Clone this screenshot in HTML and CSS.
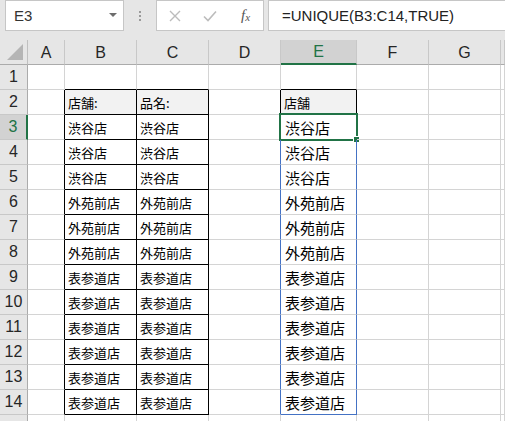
FILE: index.html
```html
<!DOCTYPE html>
<html lang="ja">
<head>
<meta charset="utf-8">
<link rel="stylesheet" href="styles.css">
</head>
<body>
<div class="app">
  <div class="toolbar">
    <div class="namebox"><span class="ref">E3</span><span class="caret"></span></div>
    <div class="sep"><span></span><span></span><span></span></div>
    <div class="btnbox">
      <svg class="ico" width="12" height="12" viewBox="0 0 12 12"><path d="M1 1L11 11M11 1L1 11" stroke="#bcbcbc" stroke-width="1.4" fill="none"/></svg>
      <svg class="ico" width="14" height="12" viewBox="0 0 14 12"><path d="M1 6.5L5 10.5L13 1.5" stroke="#bcbcbc" stroke-width="1.6" fill="none"/></svg>
      <span class="fx">f<sub>x</sub></span>
    </div>
    <div class="formula">=UNIQUE(B3:C14,TRUE)</div>
  </div>

  <div class="sheet">
    <!-- header row -->
    <div class="corner"><svg width="18" height="18" viewBox="0 0 18 18"><path d="M17 1V17H1Z" fill="#b5b5b5"/></svg></div>
    <div class="ch">A</div><div class="ch">B</div><div class="ch">C</div><div class="ch">D</div><div class="ch sel">E</div><div class="ch">F</div><div class="ch">G</div><div class="ch"></div>

    <!-- row 1 -->
    <div class="rh">1</div><div class="c"></div><div class="c bb"></div><div class="c bb"></div><div class="c"></div><div class="c bb"></div><div class="c"></div><div class="c"></div><div class="c"></div>

    <!-- row 2 -->
    <div class="rh">2</div><div class="c br"></div><div class="c br bb hd">店舗:</div><div class="c br bb hd">品名:</div><div class="c br"></div><div class="c br bb hd">店舗</div><div class="c"></div><div class="c"></div><div class="c"></div>

    <!-- row 3 -->
    <div class="rh rsel">3</div><div class="c br"></div><div class="c br bb">渋谷店</div><div class="c br bb">渋谷店</div><div class="c blr"></div><div class="c blr big cur">渋谷店<span class="cursor"><span class="handle"></span></span></div><div class="c"></div><div class="c"></div><div class="c"></div>

    <!-- row 4 -->
    <div class="rh">4</div><div class="c br"></div><div class="c br bb">渋谷店</div><div class="c br bb">渋谷店</div><div class="c blr"></div><div class="c blr big">渋谷店</div><div class="c"></div><div class="c"></div><div class="c"></div>

    <!-- row 5 -->
    <div class="rh">5</div><div class="c br"></div><div class="c br bb">渋谷店</div><div class="c br bb">渋谷店</div><div class="c blr"></div><div class="c blr big">渋谷店</div><div class="c"></div><div class="c"></div><div class="c"></div>

    <!-- row 6 -->
    <div class="rh">6</div><div class="c br"></div><div class="c br bb">外苑前店</div><div class="c br bb">外苑前店</div><div class="c blr"></div><div class="c blr big">外苑前店</div><div class="c"></div><div class="c"></div><div class="c"></div>

    <!-- row 7 -->
    <div class="rh">7</div><div class="c br"></div><div class="c br bb">外苑前店</div><div class="c br bb">外苑前店</div><div class="c blr"></div><div class="c blr big">外苑前店</div><div class="c"></div><div class="c"></div><div class="c"></div>

    <!-- row 8 -->
    <div class="rh">8</div><div class="c br"></div><div class="c br bb">外苑前店</div><div class="c br bb">外苑前店</div><div class="c blr"></div><div class="c blr big">外苑前店</div><div class="c"></div><div class="c"></div><div class="c"></div>

    <!-- row 9 -->
    <div class="rh">9</div><div class="c br"></div><div class="c br bb">表参道店</div><div class="c br bb">表参道店</div><div class="c blr"></div><div class="c blr big">表参道店</div><div class="c"></div><div class="c"></div><div class="c"></div>

    <!-- row 10 -->
    <div class="rh">10</div><div class="c br"></div><div class="c br bb">表参道店</div><div class="c br bb">表参道店</div><div class="c blr"></div><div class="c blr big">表参道店</div><div class="c"></div><div class="c"></div><div class="c"></div>

    <!-- row 11 -->
    <div class="rh">11</div><div class="c br"></div><div class="c br bb">表参道店</div><div class="c br bb">表参道店</div><div class="c blr"></div><div class="c blr big">表参道店</div><div class="c"></div><div class="c"></div><div class="c"></div>

    <!-- row 12 -->
    <div class="rh">12</div><div class="c br"></div><div class="c br bb">表参道店</div><div class="c br bb">表参道店</div><div class="c blr"></div><div class="c blr big">表参道店</div><div class="c"></div><div class="c"></div><div class="c"></div>

    <!-- row 13 -->
    <div class="rh">13</div><div class="c br"></div><div class="c br bb">表参道店</div><div class="c br bb">表参道店</div><div class="c blr"></div><div class="c blr big">表参道店</div><div class="c"></div><div class="c"></div><div class="c"></div>

    <!-- row 14 -->
    <div class="rh">14</div><div class="c br"></div><div class="c br bb">表参道店</div><div class="c br bb">表参道店</div><div class="c blr"></div><div class="c blr bbl big">表参道店</div><div class="c"></div><div class="c"></div><div class="c"></div>

    <!-- row 15 (partial, label out of view) -->
    <div class="rh"></div><div class="c"></div><div class="c"></div><div class="c"></div><div class="c"></div><div class="c"></div><div class="c"></div><div class="c"></div><div class="c"></div>
  </div>
</div>
</body>
</html>
```

FILE: styles.css
```css
* { box-sizing: border-box; }
html, body { margin: 0; padding: 0; }
body {
  width: 505px;
  height: 421px;
  overflow: hidden;
  background: #ffffff;
  font-family: "Liberation Sans", Arial, sans-serif;
}
.app { width: 505px; height: 421px; overflow: hidden; }

/* ---------- formula bar ---------- */
.toolbar {
  height: 40px;
  background: #e6e6e6;
  display: flex;
  align-items: flex-start;
  padding-left: 5px;
}
.namebox {
  width: 119px;
  height: 31px;
  background: #fff;
  border: 1px solid #c6c6c6;
  display: flex;
  align-items: center;
  justify-content: space-between;
  padding: 0 6px 0 8px;
}
.ref { font-size: 15px; color: #333; }
.caret {
  width: 0; height: 0;
  border-left: 4px solid transparent;
  border-right: 4px solid transparent;
  border-top: 4px solid #6d6d6d;
  margin-top: -2px;
}
.sep {
  width: 32px;
  height: 31px;
  display: flex;
  flex-direction: column;
  align-items: center;
  justify-content: center;
  gap: 2px;
}
.sep span { width: 2px; height: 2px; background: #9a9a9a; }
.btnbox {
  width: 108px;
  height: 31px;
  background: #fff;
  border: 1px solid #c6c6c6;
  display: flex;
  align-items: center;
  padding-left: 12px;
  gap: 22px;
}
.fx {
  font-family: "Liberation Serif", serif;
  font-style: italic;
  font-size: 15px;
  color: #555;
  margin-left: 2px;
}
.fx sub { font-size: 11px; vertical-align: -1px; }
.formula {
  flex: 1;
  height: 31px;
  margin-left: 4px;
  background: #fff;
  border: 1px solid #c6c6c6;
  border-right: none;
  font-size: 15px;
  color: #222;
  display: flex;
  align-items: center;
  padding-left: 13px;
  white-space: nowrap;
}

/* ---------- sheet grid ---------- */
.sheet {
  display: grid;
  grid-template-columns: 28px 37px 72px 72px 72px 76px 72px 72px 1fr;
  grid-auto-rows: 25px;
}
.corner {
  background: #e6e6e6;
  border-right: 1px solid #c0c0c0;
  border-bottom: 1px solid #ababab;
  display: flex;
  align-items: flex-end;
  justify-content: flex-end;
  padding: 0 3px 3px 0;
}
.ch {
  background: #e6e6e6;
  border-right: 1px solid #c8c8c8;
  border-bottom: 1px solid #ababab;
  display: flex;
  align-items: center;
  justify-content: center;
  font-size: 16px;
  color: #262626;
  padding-top: 1px;
}
.ch.sel {
  background: #d2d2d2;
  border-bottom: 2px solid #217346;
  color: #217346;
}
.rh {
  background: #e6e6e6;
  border-right: 1px solid #ababab;
  border-bottom: 1px solid #c8c8c8;
  display: flex;
  align-items: center;
  justify-content: center;
  font-size: 16px;
  color: #262626;
}
.rh.rsel {
  background: #d2d2d2;
  border-right: 2px solid #217346;
  color: #217346;
}
.c {
  position: relative;
  border-right: 1px solid #d4d4d4;
  border-bottom: 1px solid #d4d4d4;
  display: flex;
  align-items: center;
  padding-left: 3px;
  font-family: "Noto Sans CJK JP", "Liberation Sans", sans-serif;
  font-size: 13px;
  color: #000;
  white-space: nowrap;
}
.c.br { border-right-color: #000; }
.c.bb { border-bottom-color: #000; }
.c.hd { background: #f2f2f2; }
.c.blr { border-right-color: #4472c4; }
.c.bbl { border-bottom-color: #4472c4; }
.c.big { font-size: 15px; padding-left: 4px; }

/* active cell cursor */
.cursor {
  position: absolute;
  left: -2px;
  top: -2px;
  width: 79px;
  height: 28px;
  border: 2px solid #217346;
}
.handle {
  position: absolute;
  right: -4px;
  bottom: -4px;
  width: 7px;
  height: 7px;
  background: #217346;
  border: 1px solid #fff;
}
```
